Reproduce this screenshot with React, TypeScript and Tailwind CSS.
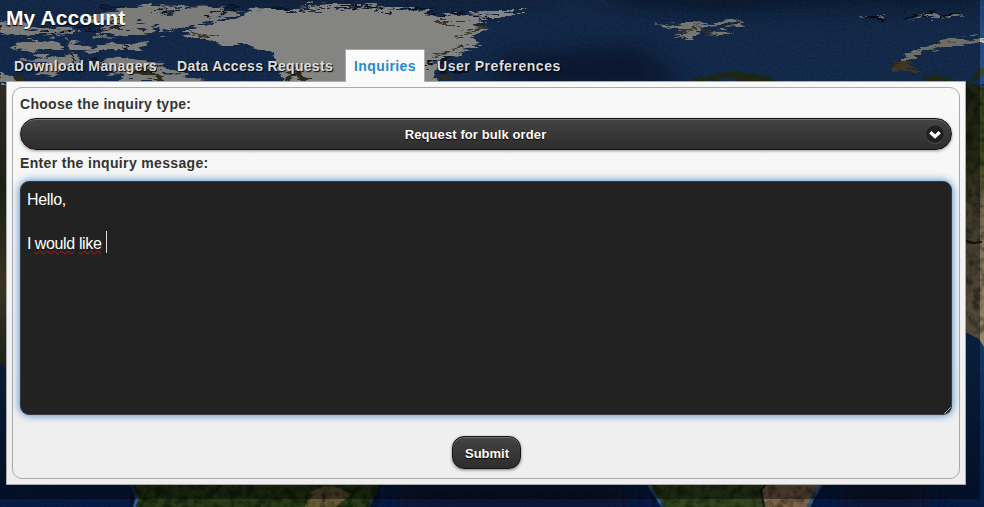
import React from "react";

const tabs = [
  { label: "Download Managers", cls: "w-[163px] tracking-[0.4px]" },
  { label: "Data Access Requests", cls: "w-[169px] tracking-[0.32px]" },
  { label: "Inquiries", cls: "w-[80px] tracking-[0.4px]", active: true },
  { label: "User Preferences", cls: "w-[150px] tracking-[0.54px]" },
];

function EarthMap() {
  return (
    <svg className="absolute inset-0" width="984" height="507" viewBox="0 0 984 507" aria-hidden="true">
      <defs>
        <filter id="coast" x="-5%" y="-10%" width="110%" height="120%" colorInterpolationFilters="sRGB">
          <feTurbulence type="fractalNoise" baseFrequency="0.05 0.28" numOctaves="4" seed="4" result="n" />
          <feDisplacementMap in="SourceGraphic" in2="n" scale="14" xChannelSelector="R" yChannelSelector="G" result="d" />
          <feGaussianBlur in="d" stdDeviation="0.35" />
        </filter>
        <filter id="soft" x="-30%" y="-30%" width="160%" height="160%">
          <feGaussianBlur stdDeviation="12" />
        </filter>
        <filter id="grain" x="0" y="0" width="100%" height="100%" colorInterpolationFilters="sRGB">
          <feTurbulence type="fractalNoise" baseFrequency="0.45" numOctaves="3" seed="8" />
          <feColorMatrix values="0 0 0 0 0  0 0 0 0 0  0 0 0 0 0  1.5 0 0 0 -0.5" />
        </filter>
        <filter id="landGrain" x="0" y="0" width="100%" height="100%" colorInterpolationFilters="sRGB">
          <feTurbulence type="fractalNoise" baseFrequency="0.12" numOctaves="4" seed="3" />
          <feColorMatrix values="0 0 0 0 0  0 0 0 0 0.03  0 0 0 0 0  3 0 0 0 -1.2" />
        </filter>
        <linearGradient id="sea" x1="0" y1="0" x2="0" y2="1">
          <stop offset="0" stopColor="#264d87" />
          <stop offset=".2" stopColor="#24508f" />
          <stop offset=".7" stopColor="#12386c" />
          <stop offset="1" stopColor="#081c49" />
        </linearGradient>
        <linearGradient id="landEast" x1="0" y1="80" x2="0" y2="340" gradientUnits="userSpaceOnUse">
          <stop offset="0" stopColor="#353c20" />
          <stop offset=".3" stopColor="#3c4320" />
          <stop offset=".5" stopColor="#756650" />
          <stop offset="1" stopColor="#938369" />
        </linearGradient>
        <linearGradient id="landWest" x1="0" y1="90" x2="0" y2="370" gradientUnits="userSpaceOnUse">
          <stop offset="0" stopColor="#514d3d" />
          <stop offset=".35" stopColor="#303d21" />
          <stop offset=".7" stopColor="#685b3c" />
          <stop offset="1" stopColor="#304128" />
        </linearGradient>
      </defs>
      <rect width="984" height="507" fill="url(#sea)" />
      <g filter="url(#soft)">
        <path d="M500 55L580 50L640 45L690 90H560L490 80Z" fill="#14295a" />
        <path d="M560 -12H984V2L820 2L730 7L640 4Z" fill="#0a1a38" />
        <path d="M200 -10H560V1H200Z" fill="#15294c" />
        <path d="M400 480H630V520H400ZM840 480H930V520H840Z" fill="#071638" />
      </g>
      <rect width="984" height="507" filter="url(#grain)" opacity=".25" />
      <g filter="url(#coast)">
        <path d="M0 22L20 23L30 27L45 29L60 32L53 36L31 33L15 35L0 32ZM16 43L36 39L50 46L31 51L13 48ZM35 28L62 26L80 31L74 36L56 35ZM39 45L58 42L66 50L43 51ZM66 40L74 43L91 45L137 43L147 40L140 51L99 51L72 50ZM100 25L130 22L157 25L147 33L132 36L92 37L105 33ZM84 20L102 13L147 5L214 7L243 12L220 17L209 23L185 25L173 32L157 33L160 25L140 21L126 24L114 19L91 25ZM18 60L43 55L59 57L58 64L38 64ZM56 59L76 55L82 61L66 68L52 77L35 74L42 68ZM93 64L113 56L139 59L151 62L166 64L163 72L190 75L207 83H116L125 75L105 70ZM0 73L16 76L30 84H0Z" fill="#dededb" />
        <path d="M240 17L252 9L280 10L307 7L332 5L363 5L410 9L442 16L494 12L526 12L508 18L480 20L474 25L486 31L469 37L482 44L463 49L458 56L442 60L433 71L437 86H286L272 54L244 45L214 43L181 32L210 24Z" fill="#ecece9" />
        <path d="M653 24L675 26L687 22L715 23L747 21L740 25L706 27L697 32L690 39L676 36L688 31L667 29ZM709 32L730 33L727 37L716 35ZM854 18L885 16L877 19ZM907 18L930 14L949 16L965 14L956 18L931 19Z" fill="#d2d3ce" />
      </g>
      <g filter="url(#coast)" fill="none">
        <path d="M191 32Q206 38 219 35M431 59Q450 48 465 46M457 38Q470 29 485 27M435 22L468 22" stroke="#6c654b" strokeWidth="2" />
        <path d="M134 71Q158 72 164 83M285 80L297 72L307 84M440 78H454M14 78L32 83" stroke="#504b31" strokeWidth="5" />
        <path d="M65 23L94 31M116 50L132 45M99 7L126 7M155 12L183 10M207 16L243 5M40 33L78 32M100 29L145 29M70 55L80 74M128 64L154 71M95 60L123 68M270 9H331M335 10L355 6L392 12M405 7L435 12M440 16L468 13M470 16L496 17M430 63L452 62M432 73L466 70M425 67L458 54" stroke="#0d1c3a" strokeWidth="1.6" />
        <path d="M904 17L920 13M921 18L936 12M940 17L959 13M866 19H884" stroke="#08152b" strokeWidth="2.4" />
        <path d="M680 33L698 26L706 32L729 31" stroke="#5c5d45" strokeWidth="1.4" />
        <path d="M986 39Q942 43 923 50Q907 55 903 64" stroke="#c5c4b8" strokeWidth="5" />
        <path d="M893 67L908 67L918 72" stroke="#76603c" strokeWidth="6" />
        <path d="M695 82Q732 69 771 84" stroke="#354223" strokeWidth="8" />
        <path d="M922 77L963 84L984 70" stroke="#384724" strokeWidth="5" />
      </g>
      <path d="M965 83L984 87V347L979 339L965 332Z" fill="url(#landEast)" />
      <path d="M0 85H8V370L0 363Z" fill="url(#landWest)" />
      <path d="M129 479H382L370 507H136L137 499Z" fill="#2a3b19" />
      <path d="M645 479H823L811 507H662Z" fill="#34451f" />
      <path d="M762 479H822L808 507H766L761 492Z" fill="#7d634b" />
      <path d="M310 492L330 484L352 494L336 507H305Z" fill="#665a35" />
      <path d="M129 479L137 499L134 507M645 479L663 507M824 479L808 507" fill="none" stroke="#2c5c91" strokeWidth="3" />
      <path d="M766 484L761 490L764 507" fill="none" stroke="#17201a" strokeWidth="2" />
      <path d="M965 241L974 243L982 242" fill="none" stroke="#222018" strokeWidth="2" />
      <svg x="130" y="480" width="250" height="27"><rect width="250" height="27" filter="url(#landGrain)" opacity=".5" /></svg>
      <svg x="652" y="480" width="164" height="27"><rect width="164" height="27" filter="url(#landGrain)" opacity=".4" /></svg>
      <svg x="965" y="84" width="19" height="250"><rect width="19" height="250" filter="url(#landGrain)" opacity=".4" /></svg>
      <path d="M0 0H980V499H0Z" fill="#000" opacity=".44" />
    </svg>
  );
}

function ArrowIcon() {
  return (
    <svg width="18" height="19" viewBox="0 0 18 19" aria-hidden="true">
      <circle cx="9" cy="10" r="8.7" fill="#666" />
      <circle cx="9" cy="9.3" r="8.9" fill="#202020" />
      <path d="M4.3 7.2L9 11.6L13.7 7.2" fill="none" stroke="#fff" strokeWidth="3.3" />
    </svg>
  );
}

export default function App() {
  return (
    <div className="relative h-[507px] w-[984px] overflow-hidden bg-[#0b182c] font-['Liberation_Sans',Arial,sans-serif]">
      <EarthMap />
      <main className="relative px-[6px]">
        <h1 className="h-[49px] pt-[6px] text-[21px] leading-[24px] font-bold tracking-[0.1px] text-white [text-shadow:0_1px_1px_#000]">My Account</h1>
        <nav className="flex h-[32px] text-[14px] font-bold">
          {tabs.map((tab) => (
            <button
              key={tab.label}
              className={`h-[33px] shrink-0 text-left whitespace-nowrap ${tab.cls} ${tab.active ? "relative z-10 mr-[4px] ml-[7px] border border-b-0 border-[#aaa] bg-[#fafafa] pl-[8px] leading-[32px] text-[#2489ce]" : "pl-2 leading-[34px] text-[#ddd] [text-shadow:1px_1px_1px_#000]"}`}
            >
              {tab.label}
            </button>
          ))}
        </nav>
        <section className="h-[404px] w-[960px] border border-[#aaa] bg-linear-to-b from-[#f9f9f9] to-[#eee] p-[5px]">
          <form className="h-[392px] w-[948px] rounded-[10px] border border-[#aaa] px-[7px] pt-[7px]">
            <label className="block h-[23px] text-[14px] leading-[18px] font-bold tracking-[0.3px] text-[#333]">Choose the inquiry type:</label>
            <button type="button" className="flex h-[32px] w-[932px] items-center rounded-[16px] border border-[#111] bg-linear-to-b from-[#444] to-[#2d2d2d] pt-px pr-[7px] text-[13px] font-bold text-white shadow-[inset_0_1px_0_rgba(255,255,255,0.25),0_1px_3px_rgba(0,0,0,0.4)]">
              <span className="flex-1 pt-px pl-[4px] text-center tracking-[0.1px] [text-shadow:0_1px_1px_#000]">Request for bulk order</span>
              <ArrowIcon />
            </button>
            <label className="block h-[31px] pt-[4px] text-[14px] leading-[18px] font-bold tracking-[0.34px] text-[#333]">Enter the inquiry message:</label>
            <div className="relative h-[234px] w-[932px] rounded-[9px] border border-[#333b45] bg-[#222] px-[6px] pt-[7px] text-[16px] leading-[22px] tracking-[-0.35px] text-white shadow-[0_0_8px_#387bbe]">
              <p>Hello,</p>
              <p className="h-[22px]" />
              <p className="flex">
                <span>I&nbsp;</span>
                <span className="-ml-[0.5px] underline decoration-[#f00000] decoration-wavy decoration-[1px] underline-offset-[1px]">would</span>
                <span>&nbsp;</span>
                <span className="underline decoration-[#f00000] decoration-wavy decoration-[1px] underline-offset-[1px]">like</span>
                <span className="-mt-[2px] ml-[5px] h-[22px] w-px bg-[#ddd]" />
              </p>
              <svg className="absolute right-0 bottom-0" width="8" height="8" viewBox="0 0 8 8" aria-hidden="true">
                <path d="M1 8L8 1M5 8L8 5" stroke="#aaa" strokeWidth="1" />
              </svg>
            </div>
            <button type="button" className="mt-[21px] ml-[432px] flex h-[33px] w-[69px] items-center justify-center rounded-[12px] border border-[#111] bg-linear-to-b from-[#444] to-[#2d2d2d] pt-[2px] pl-px text-[13px] font-bold text-white shadow-[inset_0_1px_0_rgba(255,255,255,0.25),0_1px_3px_rgba(0,0,0,0.5)] [text-shadow:0_1px_1px_#000]">
              Submit
            </button>
          </form>
        </section>
      </main>
    </div>
  );
}
